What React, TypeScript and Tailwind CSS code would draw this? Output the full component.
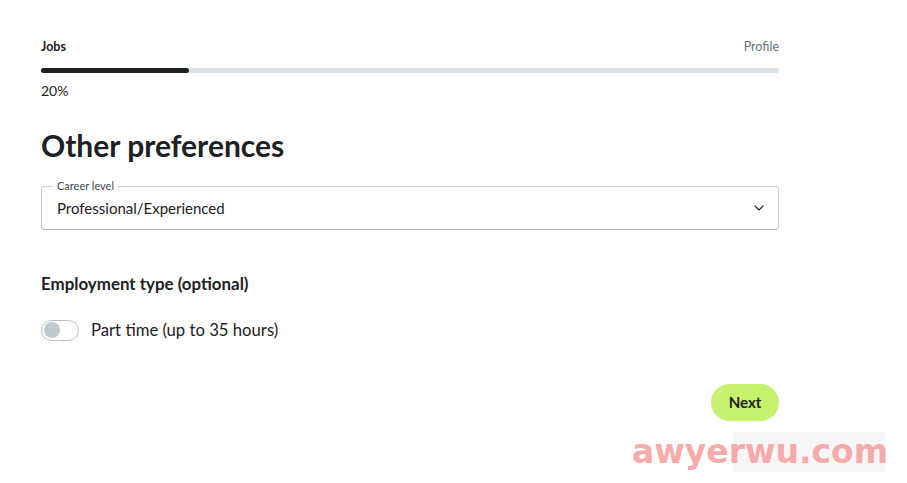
import { ChevronDown } from "lucide-react";

export default function App() {
  return (
    <main className="relative min-h-[483px] w-[907px] bg-white font-['Lato',sans-serif] text-[#1d2124]">
      <div className="ml-[41px] flex w-[738px] flex-col pt-[38px]">
        {/* Progress header */}
        <div className="flex items-center justify-between text-[12.5px] leading-[18px]">
          <span className="font-bold">Jobs</span>
          <span className="text-[#5e737d]">Profile</span>
        </div>
        <div className="mt-[12px] h-[5px] w-full rounded-full bg-[#dbe2e6]">
          <div className="h-full w-[20%] rounded-full bg-[#1d2124]" />
        </div>
        <p className="mt-[8px] text-[14px] leading-[20px]">20%</p>

        <h1 className="mt-[24px] text-[30px] font-bold leading-[40px]">
          Other preferences
        </h1>

        {/* Select */}
        <div className="relative mt-[21px] flex h-[44px] items-center justify-between rounded-[3px] border border-[#c6d0d6] border-b-[#a3b2ba] pl-[15px] pr-[11px]">
          <span className="absolute left-[11px] top-[-8px] bg-white px-[4px] text-[11px] leading-[14px] text-[#3d4a52]">
            Career level
          </span>
          <span className="text-[15px] leading-[20px]">Professional/Experienced</span>
          <ChevronDown className="h-[16px] w-[16px] text-[#1d2124]" strokeWidth={1.6} />
        </div>

        <h2 className="mt-[42px] text-[16.9px] font-bold leading-[24px]">
          Employment type (optional)
        </h2>

        <div className="mt-[22px] flex items-center gap-[12px]">
          <div className="flex h-[21px] w-[38px] items-center rounded-full border border-[#b6c3ca] px-[2px]">
            <div className="h-[16px] w-[16px] rounded-full bg-[#bfcad0]" />
          </div>
          <span className="text-[16.7px] leading-[24px]">Part time (up to 35 hours)</span>
        </div>

        <div className="mt-[42px] flex justify-end">
          <button className="h-[37px] w-[68px] rounded-full bg-[#c6f16d] text-[15px] font-bold text-[#1d2124]">
            Next
          </button>
        </div>
      </div>

      {/* watermark */}
      <div className="absolute left-[733px] top-[432px] h-[40px] w-[152px] bg-[#f2f2f2]/70" />
      <span className="absolute left-[632px] top-[430px] text-[33px] font-bold leading-[44px] text-[#f7a0a0]/90 font-['DejaVu_Sans',sans-serif]">
        awyerwu.com
      </span>
    </main>
  );
}
